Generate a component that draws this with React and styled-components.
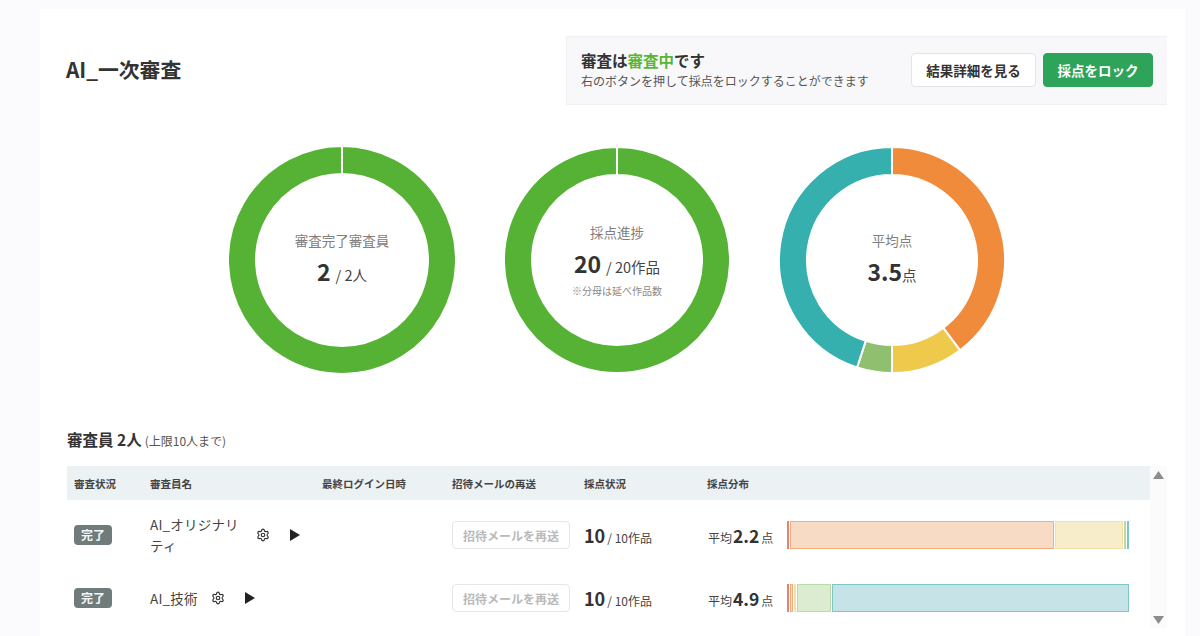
import React from "react";
import styled, { createGlobalStyle } from "styled-components";
import { Settings } from "lucide-react";

const Global = createGlobalStyle`
  html, body {
    margin: 0;
    height: 636px;
    overflow: hidden;
    background: #fbfafc;
    font-family: "Noto Sans CJK JP", "Noto Sans", sans-serif;
    color: #3a3a3a;
  }
`;

const Page = styled.div`
  width: 1200px;
  height: 636px;
  padding: 9px 15px 0 40px;
  box-sizing: border-box;
  overflow: hidden;
`;

const Card = styled.main`
  background: #fff;
  height: 640px;
  padding: 27px 18px 0 27px;
  box-sizing: border-box;
`;

const Header = styled.header`
  display: flex;
  justify-content: space-between;
  align-items: center;
  height: 69px;
`;

const Title = styled.h1`
  margin: 0 0 3px -1px;
  font-size: 20.8px;
  font-weight: 700;
  color: #333;
`;

const Banner = styled.div`
  width: 601px;
  height: 69px;
  box-sizing: border-box;
  display: flex;
  align-items: center;
  justify-content: space-between;
  padding: 0 14px;
  background: #f8f8fa;
  border: 1px solid #f0f0f3;
  border-right: 0;
`;

const BannerText = styled.div`
  display: flex;
  flex-direction: column;
  padding-bottom: 1px;
`;

const BannerTitle = styled.div`
  font-size: 15.5px;
  font-weight: 700;
  line-height: 20px;
  color: #333;
`;

const Accent = styled.span`
  color: #58b535;
`;

const BannerNote = styled.div`
  margin-top: 1px;
  font-size: 12px;
  line-height: 19px;
  color: #555;
`;

const BannerActions = styled.div`
  display: flex;
  gap: 7px;
  margin-bottom: 1px;
`;

const Button = styled.button`
  height: 34px;
  width: ${(p) => (p.$primary ? "110px" : "125px")};
  box-sizing: border-box;
  border-radius: 4px;
  border: 1px solid ${(p) => (p.$primary ? "#2ea35a" : "#e4e4e8")};
  background: ${(p) => (p.$primary ? "#2ea35a" : "#fff")};
  color: ${(p) => (p.$primary ? "#fff" : "#333")};
  font-family: inherit;
  font-size: 13.5px;
  font-weight: 700;
  padding: 0;
`;

const Charts = styled.section`
  display: flex;
  justify-content: center;
  gap: 49px;
  margin-top: 42px;
`;

const Donut = styled.div`
  position: relative;
  width: 226px;
  height: 226px;
`;

const DonutSvg = styled.svg`
  display: block;
  overflow: visible;
`;

const DonutCenter = styled.div`
  position: absolute;
  inset: 0;
  padding-top: 1px;
  display: flex;
  flex-direction: column;
  align-items: center;
  justify-content: center;
`;

const DonutLabel = styled.div`
  font-size: 13.5px;
  line-height: 20px;
  color: #808080;
`;

const DonutValue = styled.div`
  margin-top: 5px;
  font-size: 14.5px;
  line-height: 32px;
  color: #444;
`;

const Big = styled.strong`
  font-size: 23px;
  font-weight: 700;
  color: #333;
  margin-right: ${(p) => p.$gap || 0}px;
`;

const DonutNote = styled.div`
  font-size: 10px;
  line-height: 16px;
  color: #8a8a8a;
`;

const SectionTitle = styled.h2`
  margin: 54px 0 13px;
  font-size: 15.5px;
  line-height: 24px;
  font-weight: 700;
  color: #333;
`;

const SectionNote = styled.span`
  font-size: 12px;
  font-weight: 400;
  color: #555;
  margin-left: 3px;
`;

const TableWrap = styled.section`
  display: flex;
  align-items: stretch;
  height: 162px;
`;

const Table = styled.div`
  width: 1083px;
`;

const columns = "83px 172px 130px 132px 123px 1fr";

const HeadRow = styled.div`
  display: grid;
  grid-template-columns: ${columns};
  align-items: center;
  height: 34px;
  background: #ecf1f3;
  font-size: 10.5px;
  font-weight: 700;
  color: #444;
`;

const HeadCell = styled.div`
  padding-left: ${(p) => (p.$first ? "7px" : "0")};
`;

const Row = styled.div`
  display: grid;
  grid-template-columns: ${columns};
  align-items: center;
  padding: 14px 0;
`;

const StatusCell = styled.div`
  display: flex;
  padding-left: 7px;
`;

const Badge = styled.span`
  width: 38px;
  height: 20px;
  line-height: 20px;
  text-align: center;
  border-radius: 4px;
  background: #6f7c7b;
  color: #f4f6f5;
  font-size: 12px;
  font-weight: 700;
`;

const NameCell = styled.div`
  display: flex;
  align-items: center;
`;

const Name = styled.span`
  max-width: 93px;
  font-size: 13.5px;
  line-height: 21px;
  color: #444;
  letter-spacing: 0.2px;
`;

const GearButton = styled.span`
  display: flex;
  margin-left: 13px;
  color: #333;
`;

const PlayIcon = styled.svg`
  display: block;
  margin-left: 20px;
  fill: #222;
`;

const ResendCell = styled.div`
  display: flex;
`;

const ResendButton = styled.button`
  width: 118px;
  height: 28px;
  box-sizing: border-box;
  padding: 0;
  border-radius: 4px;
  border: 1px solid #e6e6ea;
  background: #fff;
  color: #b9b9b9;
  font-family: inherit;
  font-size: 12px;
  font-weight: 700;
`;

const Score = styled.div`
  font-size: 12px;
  color: #444;
  white-space: nowrap;
`;

const ScoreNum = styled.strong`
  font-size: 18px;
  font-weight: 700;
  color: #333;
  margin-right: 2px;
`;

const DistCell = styled.div`
  display: flex;
  align-items: center;
`;

const Average = styled.div`
  width: 80px;
  padding-left: 1px;
  box-sizing: border-box;
  font-size: 12px;
  color: #444;
  white-space: nowrap;
`;

const AvgNum = styled.strong`
  font-size: 17.5px;
  font-weight: 700;
  color: #333;
  margin: 0 2px 0 1px;
`;

const Bar = styled.div`
  display: flex;
  gap: 1px;
  width: 342px;
  height: 28px;
`;

const tones = {
  red: ["#f5d6d2", "#e8807a"],
  orange: ["#f8dbc4", "#f0ae7c"],
  yellow: ["#f7edcb", "#f2e2a6"],
  green: ["#dcecd0", "#bcdaa8"],
  teal: ["#c6e4e8", "#7cc6c4"],
};

const Segment = styled.div`
  box-sizing: border-box;
  flex: none;
  height: 100%;
  background: ${(p) => tones[p.$tone][0]};
  border: 1px solid ${(p) => tones[p.$tone][1]};
`;

const Scrollbar = styled.div`
  width: 17px;
  background: #fbfbfc;
  display: flex;
  flex-direction: column;
  justify-content: space-between;
  align-items: center;
  padding: 5px 0 4px;
  box-sizing: border-box;
`;

const Arrow = styled.svg`
  display: block;
  fill: #8d8d8d;
`;

const polar = (a, r) => {
  const t = ((a - 90) * Math.PI) / 180;
  return [113 + r * Math.cos(t), 113 + r * Math.sin(t)];
};

const arcPath = (from, to, outer, inner) => {
  const large = to - from > 180 ? 1 : 0;
  const [x1, y1] = polar(from, outer);
  const [x2, y2] = polar(to, outer);
  const [x3, y3] = polar(to, inner);
  const [x4, y4] = polar(from, inner);
  return `M${x1} ${y1}A${outer} ${outer} 0 ${large} 1 ${x2} ${y2}L${x3} ${y3}A${inner} ${inner} 0 ${large} 0 ${x4} ${y4}Z`;
};

// radii include the 1px taken by the white segment stroke
const Ring = ({ parts, outer = 113, inner = 85 }) => {
  let start = 0;
  return (
    <DonutSvg width="226" height="226" viewBox="0 0 226 226">
      {parts.map(([deg, color]) => {
        const d = arcPath(start, start + deg, outer, inner);
        start += deg;
        return <path key={color} d={d} fill={color} stroke="#fff" strokeWidth="2" />;
      })}
    </DonutSvg>
  );
};

const fullGreen = [[359.99, "#55b234"]];
const scoreParts = [
  [143, "#ef8b3a"],
  [37, "#efc94c"],
  [18, "#8fc06f"],
  [162, "#35b0ae"],
];

const judges = [
  {
    name: "AI_オリジナリティ",
    avg: "2.2",
    bar: [["red", 2], ["orange", 264], ["yellow", 68], ["green", 2], ["teal", 2]],
  },
  {
    name: "AI_技術",
    avg: "4.9",
    bar: [["red", 2], ["orange", 3], ["yellow", 2], ["green", 34], ["teal", 297]],
  },
];

const heads = ["審査状況", "審査員名", "最終ログイン日時", "招待メールの再送", "採点状況", "採点分布"];

export default function App() {
  return (
    <>
      <Global />
      <Page>
        <Card>
          <Header>
            <Title>AI_一次審査</Title>
            <Banner>
              <BannerText>
                <BannerTitle>
                  審査は<Accent>審査中</Accent>です
                </BannerTitle>
                <BannerNote>右のボタンを押して採点をロックすることができます</BannerNote>
              </BannerText>
              <BannerActions>
                <Button>結果詳細を見る</Button>
                <Button $primary>採点をロック</Button>
              </BannerActions>
            </Banner>
          </Header>

          <Charts>
            <Donut>
              <Ring parts={fullGreen} outer={114} inner={86} />
              <DonutCenter>
                <DonutLabel>審査完了審査員</DonutLabel>
                <DonutValue>
                  <Big $gap={5}>2</Big>/ 2人
                </DonutValue>
              </DonutCenter>
            </Donut>
            <Donut>
              <Ring parts={fullGreen} />
              <DonutCenter>
                <DonutLabel>採点進捗</DonutLabel>
                <DonutValue>
                  <Big $gap={5}>20</Big>/ 20作品
                </DonutValue>
                <DonutNote>※分母は延べ作品数</DonutNote>
              </DonutCenter>
            </Donut>
            <Donut>
              <Ring parts={scoreParts} />
              <DonutCenter>
                <DonutLabel>平均点</DonutLabel>
                <DonutValue>
                  <Big>3.5</Big>点
                </DonutValue>
              </DonutCenter>
            </Donut>
          </Charts>

          <SectionTitle>
            審査員 2人<SectionNote>(上限10人まで)</SectionNote>
          </SectionTitle>

          <TableWrap>
            <Table>
              <HeadRow>
                {heads.map((h, i) => (
                  <HeadCell key={h} $first={i === 0}>
                    {h}
                  </HeadCell>
                ))}
              </HeadRow>
              {judges.map((j) => (
                <Row key={j.name}>
                  <StatusCell>
                    <Badge>完了</Badge>
                  </StatusCell>
                  <NameCell>
                    <Name>{j.name}</Name>
                    <GearButton>
                      <Settings size={14} strokeWidth={2} />
                    </GearButton>
                    <PlayIcon width="10" height="12" viewBox="0 0 10 12">
                      <path d="M0 0L10 6L0 12Z" />
                    </PlayIcon>
                  </NameCell>
                  <div />
                  <ResendCell>
                    <ResendButton>招待メールを再送</ResendButton>
                  </ResendCell>
                  <Score>
                    <ScoreNum>10</ScoreNum>/ 10作品
                  </Score>
                  <DistCell>
                    <Average>
                      平均<AvgNum>{j.avg}</AvgNum>点
                    </Average>
                    <Bar>
                      {j.bar.map(([tone, w]) => (
                        <Segment key={tone} $tone={tone} style={{ width: w }} />
                      ))}
                    </Bar>
                  </DistCell>
                </Row>
              ))}
            </Table>
            <Scrollbar>
              <Arrow width="11" height="8" viewBox="0 0 11 8">
                <path d="M5.5 0L11 8H0Z" />
              </Arrow>
              <Arrow width="11" height="8" viewBox="0 0 11 8">
                <path d="M0 0H11L5.5 8Z" />
              </Arrow>
            </Scrollbar>
          </TableWrap>
        </Card>
      </Page>
    </>
  );
}
